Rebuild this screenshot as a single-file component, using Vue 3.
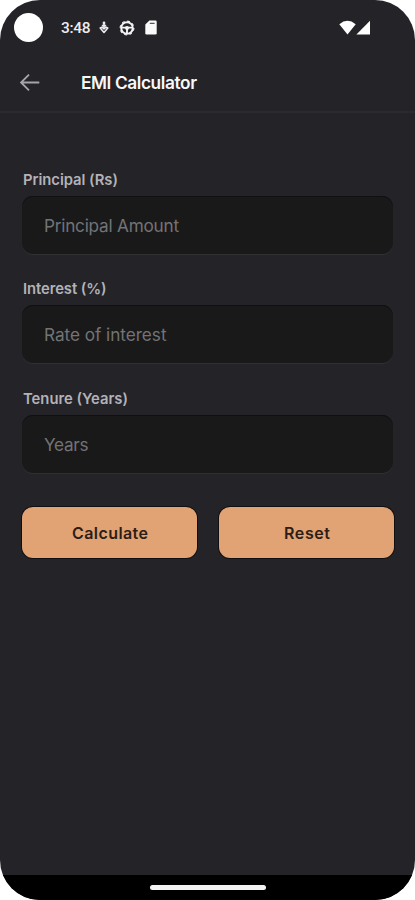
<script setup>
const fields = [
  { label: 'Principal (Rs)', hint: 'Principal Amount', labelWidth: 95, hintWidth: 135 },
  { label: 'Interest (%)', hint: 'Rate of interest', labelWidth: 83.5, hintWidth: 122.5 },
  { label: 'Tenure (Years)', hint: 'Years', labelWidth: 105, hintWidth: 44.5 },
]
const actions = [
  { label: 'Calculate', width: 76 },
  { label: 'Reset', width: 46 },
]
</script>

<template>
  <div class="phone">
    <div class="status">
      <span class="camera"></span>
      <span class="time">3:48</span>
      <svg class="ic-usb" width="10" height="14" viewBox="0 0 10 14">
        <path d="M5 1.5V8M2.8 4.6h4.4" fill="none" stroke="#ececee" stroke-width="1.7" />
        <circle cx="5" cy="2" r="1.4" fill="#ececee" />
        <path d="M1.2 7 5 11.4 8.8 7 7 6.2 5 8 3 6.2Z" fill="none" stroke="#ececee" stroke-width="1.6" stroke-linejoin="round" />
      </svg>
      <svg class="ic-wheel" width="16" height="16" viewBox="0 0 16 16">
        <circle cx="8" cy="8" r="5.8" fill="none" stroke="#f4f4f5" stroke-width="2" />
        <circle cx="8" cy="8" r="6.9" fill="none" stroke="#f4f4f5" stroke-width="1.1" stroke-dasharray="2.71 2.71" />
        <path d="M2.5 7.6h11M8 8v5.5" stroke="#f4f4f5" stroke-width="1.9" />
        <circle cx="8" cy="8" r="2" fill="#f4f4f5" />
      </svg>
      <svg class="ic-card" width="12" height="15" viewBox="0 0 12 15">
        <path d="M4.4.5h6Q11.7.5 11.7 1.8v11.4q0 1.3-1.3 1.3H1.6Q.3 14.5.3 13.2V4.6Z" fill="#fafafa" />
        <path d="M4.8 3.3h4.8" stroke="#555459" stroke-width="1.3" />
      </svg>
      <span class="spacer"></span>
      <svg class="ic-signal" width="32" height="15" viewBox="0 0 32 15">
        <path d="M.3 4.3Q8.5-2.6 16.7 4.3L8.5 14.5Z" fill="#fff" />
        <path d="M31 .7V14.5H17.4Z" fill="#fff" />
      </svg>
    </div>
    <header class="bar">
      <svg width="20" height="18" viewBox="0 0 20 18">
        <path d="M19.3 8.5H1M9 .7 1 8.5l8 7.8" fill="none" stroke="#a5a5a9" stroke-width="1.8" />
      </svg>
      <svg class="txt title" width="118" height="24"><text x="0" y="18" textLength="116">EMI Calculator</text></svg>
    </header>
    <main class="form">
      <div v-for="f in fields" :key="f.label" class="field">
        <svg class="txt label" width="120" height="20"><text x="0" y="15.7" :textLength="f.labelWidth">{{ f.label }}</text></svg>
        <div class="box">
          <svg class="txt hint" width="150" height="24"><text x="0" y="19.3" :textLength="f.hintWidth">{{ f.hint }}</text></svg>
        </div>
      </div>
      <div class="actions">
        <button v-for="a in actions" :key="a.label" class="btn" type="button">
          <svg class="txt" :width="a.width" height="20"><text x="0" y="16" :textLength="a.width">{{ a.label }}</text></svg>
        </button>
      </div>
    </main>
    <footer class="nav"><span class="handle"></span></footer>
  </div>
</template>

<style>
body {
  background: #fff;
}
</style>

<style scoped>
.phone {
  width: 415px;
  height: 900px;
  border-radius: 40px;
  overflow: hidden;
  background: #242328;
  display: flex;
  flex-direction: column;
  font-family: Inter, sans-serif;
}
.status {
  height: 55px;
  padding-left: 14px;
  box-sizing: border-box;
  display: flex;
  align-items: center;
}
.camera {
  width: 29px;
  height: 29px;
  border-radius: 50%;
  background: #fff;
}
.time {
  margin-left: 18px;
  width: 29px;
  font: 500 15.5px/20px Roboto, sans-serif;
  letter-spacing: -0.3px;
  color: #ececee;
  padding-top: 1px;
}
.ic-usb {
  margin-left: 9px;
}
.ic-wheel {
  margin-left: 10px;
}
.ic-card {
  margin-left: 10px;
}
.spacer {
  flex: 1;
}
.ic-signal {
  margin-right: 44px;
}
.bar {
  height: 58px;
  box-sizing: border-box;
  border-bottom: 2px solid #2b2a2f;
  padding-left: 20px;
  display: flex;
  align-items: center;
}
.txt {
  display: block;
  overflow: visible;
}
.title {
  margin-left: 41px;
  font-size: 17.3px;
  font-weight: 600;
  fill: #f8f8f9;
}
.form {
  flex: 1;
  padding: 55.7px 21px 0 22px;
}
.field {
  height: 109.5px;
}
.label {
  margin-left: 1px;
  font-size: 14.8px;
  font-weight: 600;
  fill: #b3b2b7;
}
.box {
  margin: 7px 1px 0 0;
  height: 58px;
  border-radius: 11px;
  box-sizing: border-box;
  background: #19191a;
  box-shadow: inset 0 1px 0 #101014, 0 1px 0 #302f32;
  padding-left: 22px;
  display: flex;
  align-items: center;
}
.hint {
  font-size: 17.2px;
  fill: #737376;
}
.actions {
  display: grid;
  grid-template-columns: 1fr 1fr;
  gap: 22px;
  padding-top: 9.8px;
}
.btn {
  height: 51px;
  border: 0;
  border-radius: 11px;
  background: #e1a274;
  box-shadow: 0 0 0 1px #101014;
  font: 600 16px/20px Inter, sans-serif;
  fill: #2b1e18;
  padding: 1px 0 0;
  display: flex;
  align-items: center;
  justify-content: center;
}
.nav {
  height: 25px;
  background: #000;
  display: flex;
  justify-content: center;
}
.handle {
  width: 116px;
  height: 5px;
  margin-top: 10px;
  border-radius: 3px;
  background: #f3f3f3;
}
</style>
